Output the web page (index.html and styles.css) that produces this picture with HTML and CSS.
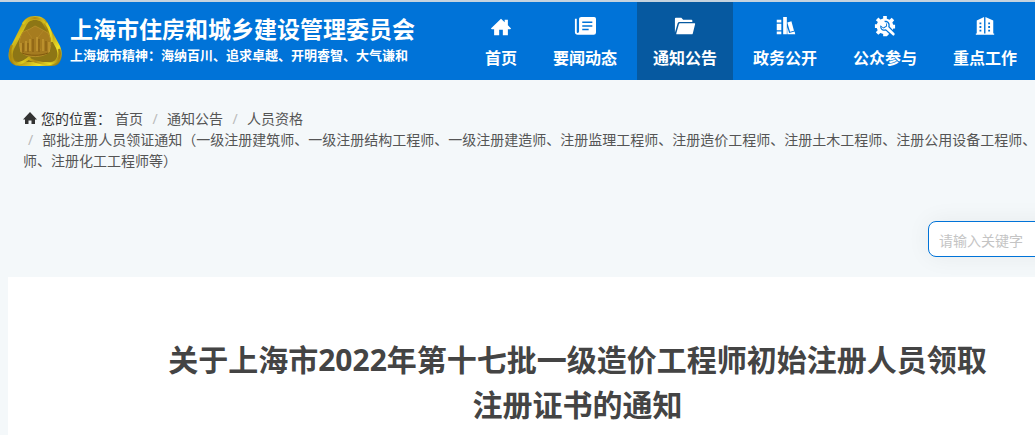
FILE: index.html
```html
<!DOCTYPE html>
<html lang="zh-CN">
<head>
<meta charset="utf-8">
<meta name="viewport" content="width=device-width, initial-scale=1">
<title>上海市住房和城乡建设管理委员会</title>
<link rel="stylesheet" href="styles.css">
</head>
<body>
<header class="header">
  <a class="brand" href="#">
    <svg class="brand-logo" viewBox="0 0 54 52" aria-hidden="true">
      <defs>
        <linearGradient id="rim" x1="0" y1="0" x2="1" y2="1">
          <stop offset="0" stop-color="#8a6d0c"/>
          <stop offset=".3" stop-color="#d8c31c"/>
          <stop offset=".5" stop-color="#a27b10"/>
          <stop offset=".78" stop-color="#efe428"/>
          <stop offset="1" stop-color="#7d5c0c"/>
        </linearGradient>
        <linearGradient id="band" x1="0" y1="0" x2="1" y2="0">
          <stop offset="0" stop-color="#a88612"/>
          <stop offset=".25" stop-color="#dccb1e"/>
          <stop offset=".5" stop-color="#b08a14"/>
          <stop offset=".8" stop-color="#e9de24"/>
          <stop offset="1" stop-color="#a17d12"/>
        </linearGradient>
      </defs>
      <path d="M27 1C34 1 38 4 40 9L52 31C55 38 54 44 51 48C49 51 45 51 40 51H14C8 51 4 50 2 46C-1 41 1 34 4 29L14 9C16 4 20 1 27 1Z" fill="url(#rim)"/>
      <path d="M27 5C32 5 34 7 36 11L48 33C51 40 49 46 43 47H12C6 47 3 41 6 34L18 11C20 7 22 5 27 5Z" fill="#8d7615"/>
      <path d="M4 30C1 36 2 45 8 49C15 48 19 45 22 42M38 8C42 14 44 20 44 27M51 34C54 44 47 49 40 49C31 48 25 47 20 43M15 9C21 1 32 2 37 8" fill="none" stroke="url(#band)" stroke-width="2.500"/>
      <path d="M27 11L33 14L40 18C44 25 43 32 41 37C35 43 20 43 14 38C10 31 11 23 15 17L22 14Z" fill="#a67c1f" stroke="#b48d28"/>
      <path d="M19 16L35 38M35 16L18 38" stroke="#b08526"/>
      <path d="M13 37V28H16V26H18V28H20V36H22V24H24V22H29V24H31V36H33V26H35V24H38V27H41V37C33 41 21 41 13 37Z" fill="#a57b20"/>
      <path d="M13 37V28M18 26V36M22 36V24M29 22V36M35 24V36M41 27V37" stroke="#d0a538" fill="none"/>
      <path d="M20 28V37M31 24V37M15 28V37M38 26V36M25 24V37M14 38C21 41 33 41 40 38" stroke="#80590f" fill="none"/>
    </svg>
    <span class="brand-text">
      <strong class="brand-name">上海市住房和城乡建设管理委员会</strong>
      <span class="brand-motto">上海城市精神：海纳百川、追求卓越、开明睿智、大气谦和</span>
    </span>
  </a>
  <nav class="nav">
    <a class="nav-item" href="#">
      <svg class="nav-icon" viewBox="0 0 24 24" aria-hidden="true"><path d="M1 13.500L12 3L16 6.800V4H19.500V10.200L23 13.500L22 14.500H19.500V21H14V15H10V21H4.500V14.500H2Z"/></svg>
      首页
    </a>
    <a class="nav-item" href="#">
      <svg class="nav-icon" viewBox="0 0 24 24" aria-hidden="true"><path fill-rule="evenodd" d="M8 1H22Q24 1 24 3V18Q24 20.500 21.500 20.500H4Q1 20.500 1 17.500V3H3V17.500Q3 18.500 4 18.500Q5.500 18.500 5.500 17V3Q5.500 1 8 1ZM9 6V7.600H20V6ZM9 10V11.600H20V10ZM9 14V15.600H16V14Z"/></svg>
      要闻动态
    </a>
    <a class="nav-item nav-item-active" href="#" aria-current="page">
      <svg class="nav-icon" viewBox="0 0 24 24" aria-hidden="true"><path d="M1 3Q1 2 2 2H8L10 4H19Q20 4 20 5V6.500H6Q4.500 6.500 4 8L1 18Z"/><path d="M6.500 8H22.500Q23.300 8 23 9L20.500 19Q20.300 20 19.200 20H3.300Q2.200 20 2.500 19L5.300 9Q5.600 8 6.500 8Z"/></svg>
      通知公告
    </a>
    <a class="nav-item" href="#">
      <svg class="nav-icon" viewBox="0 0 24 24" aria-hidden="true"><path d="M3 4H8V7H3ZM3 8.500H8V15.500H3ZM3 17H8V20H3ZM10 1H14V20H10ZM14.500 7L19 5.800L21.800 16L17.500 17.200ZM14.500 12L16.500 18.500L22.500 17L23.200 20H14.500Z"/></svg>
      政务公开
    </a>
    <a class="nav-item" href="#">
      <svg class="nav-icon" viewBox="0 0 24 24" aria-hidden="true">
        <path d="M10 0H14V3L17 4.200L19.300 2L22 4.700L20 7L21 9.500H23V13.500H21L20 16L14 22H10V19.500L7 18.500L4.700 20.500L2 17.800L4 15.500L3 13H1V9H3L4.200 6.500L2 4.500L4.800 1.700L7 3.800L10 2.800Z"/>
        <path class="nav-icon-cut" d="M11 5.500C15 4.500 18 7.500 17 11.500L23 18L19 22L13 16C9 17 6 14 7 10L10 12.500L13 11L13.500 8Z"/>
        <path d="M12 6.500C15 6.500 16.500 9 15.500 12L22.500 19Q23 21 21 21.500L13 14.500C10 15.500 8 14 8 12L10.500 13.500L14 11.500L14.300 8.500Z"/>
      </svg>
      公众参与
    </a>
    <a class="nav-item" href="#">
      <svg class="nav-icon" viewBox="0 0 24 24" aria-hidden="true"><path fill-rule="evenodd" d="M2 19H3V5L11 1V19H12.500V1L21 5V19H22V20.500H2ZM6 7V9H8V7ZM6 11V13H8V11ZM6 15V17H8V15ZM15.500 7V9H17.500V7ZM15.500 11V13H17.500V11ZM15.500 15V17H17.500V15Z"/></svg>
      重点工作
    </a>
  </nav>
</header>

<nav class="breadcrumb" aria-label="您的位置">
  <div class="crumb-row">
    <span class="crumb-label">
      <svg class="crumb-icon" viewBox="0 0 14 14" aria-hidden="true"><path d="M7 0L14 7.500H12V12H8.500V8.500H5.500V12H2V7.500H0Z"/></svg>
      您的位置：
    </span>
    <a class="crumb" href="#">首页</a>
    <span class="slash">/</span>
    <a class="crumb" href="#">通知公告</a>
    <span class="slash">/</span>
    <a class="crumb" href="#">人员资格</a>
  </div>
  <div class="crumb-last"><span class="slash slash-lead">/</span>部批注册人员领证通知（一级注册建筑师、一级注册结构工程师、一级注册建造师、注册监理工程师、注册造价工程师、注册土木工程师、注册公用设备工程师、<br>师、注册化工工程师等）</div>
</nav>

<form class="search" role="search">
  <input class="search-input" type="search" placeholder="请输入关键字" aria-label="请输入关键字">
</form>

<main class="article">
  <h1 class="article-title">关于上海市2022年第十七批一级造价工程师初始注册人员领取<br>注册证书的通知</h1>
</main>
</body>
</html>
```
FILE: styles.css
```css
* {
  box-sizing: border-box;
}

body {
  margin: 0;
  min-height: 100vh;
  display: flex;
  flex-direction: column;
  overflow: hidden;
  background: #f4f8fa;
  color: #444;
  font: 14px/21px "Noto Sans", "Noto Sans CJK SC", sans-serif;
}

a {
  color: inherit;
  text-decoration: none;
}

.header {
  display: flex;
  justify-content: space-between;
  height: 80px;
  padding: 0 2px 0 8px;
  border-top: 2px solid #c5d3df;
  background: #0073d8;
  color: #fff;
}

.brand {
  display: flex;
  align-items: center;
  gap: 8px;
  white-space: nowrap;
}

.brand-logo {
  width: 54px;
  height: 52px;
}

.brand-text {
  display: flex;
  flex-direction: column;
  padding-bottom: 4px;
}

.brand-name {
  font-size: 23px;
  line-height: 32px;
}

.brand-motto {
  font-size: 13px;
  font-weight: 700;
  line-height: 20px;
}

.nav {
  display: flex;
  gap: 4px;
}

.nav-item {
  display: flex;
  flex-direction: column;
  align-items: center;
  gap: 8px;
  padding: 14px 16px 0;
  font-size: 16px;
  font-weight: 700;
  line-height: 24px;
  white-space: nowrap;
}

.nav-item-active {
  background: #0659a0;
}

.nav-icon {
  width: 22px;
  height: 22px;
  fill: currentColor;
}

.nav-icon-cut {
  fill: #0073d8;
}

.breadcrumb {
  padding: 28px 0 0 23px;
  white-space: nowrap;
}

.crumb-row {
  display: flex;
  gap: 9px;
}

.crumb-label {
  display: flex;
  align-items: center;
  gap: 4px;
  margin-right: -5px;
  color: #333;
}

.crumb-icon {
  width: 14px;
  height: 14px;
  fill: #333;
}

.crumb,
.crumb-last {
  color: #555;
}

.slash {
  width: 6px;
  color: #bbb;
  text-align: center;
}

.slash-lead {
  padding: 0 9px 0 5px;
}

.search {
  display: flex;
  justify-content: flex-end;
  margin: 50px -113px 20px 0;
}

.search-input {
  width: 220px;
  height: 36px;
  padding: 3px 10px 0;
  border: 1px solid #0073d8;
  border-radius: 8px;
  background: #fff;
  box-shadow: 0 0 24px rgba(0, 0, 0, 0.06);
  font: inherit;
}

.search-input::placeholder {
  color: #c4c4c4;
  opacity: 1;
}

.article {
  flex: 1;
  position: relative;
  margin-left: 8px;
  padding: 60px 24px 0 136px;
  background: #fff;
}

.article-title {
  margin: 0;
  font-size: 30px;
  line-height: 45px;
  text-align: center;
  white-space: nowrap;
}
```
